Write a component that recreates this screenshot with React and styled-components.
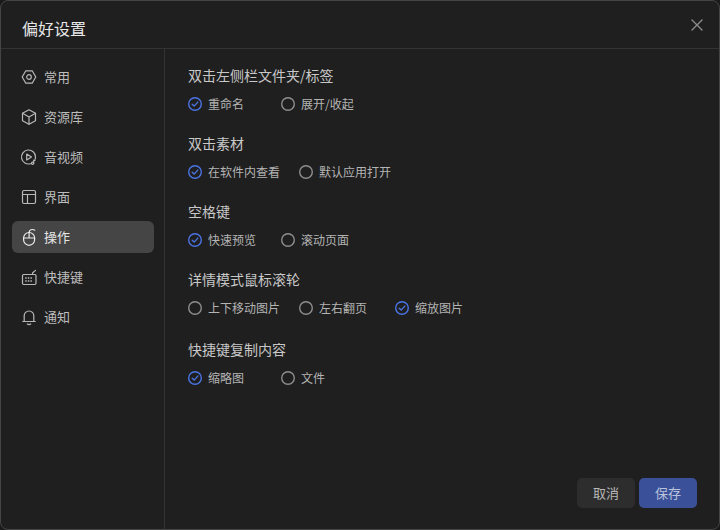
import React from 'react';
import styled, { createGlobalStyle } from 'styled-components';

const Global = createGlobalStyle`
    html, body {
        margin: 0;
        padding: 0;
        width: 720px;
        height: 530px;
        overflow: hidden;
        background: #1a1a1a;
        font-family: "Noto Sans CJK SC", "Noto Sans", sans-serif;
    }
`;

const Dialog = styled.div`
    box-sizing: border-box;
    width: 720px;
    height: 530px;
    display: flex;
    flex-direction: column;
    background: #1f1f1f;
    border: 1px solid #454545;
    border-radius: 8px;
    overflow: hidden;
`;

const Header = styled.div`
    flex: none;
    height: 47px;
    display: flex;
    align-items: center;
    justify-content: space-between;
    padding: 0 14px 0 21px;
    border-bottom: 1px solid #333;
`;

const Title = styled.div`
    font-size: 16px;
    line-height: 24px;
    color: #e8e8e8;
    margin-top: 6px;
`;

const Close = styled.button`
    width: 16px;
    height: 16px;
    padding: 0;
    border: 0;
    background: none;
    color: #8c8c8c;
    display: flex;
    margin-top: 1px;
`;

const Body = styled.div`
    flex: 1;
    display: flex;
    min-height: 0;
`;

const Sidebar = styled.div`
    flex: none;
    box-sizing: border-box;
    width: 164px;
    padding: 12px 10px 0 11px;
    border-right: 1px solid #333;
    display: flex;
    flex-direction: column;
    gap: 8px;
`;

const NavItem = styled.div`
    height: 32px;
    display: flex;
    align-items: center;
    gap: 7px;
    padding-left: 9px;
    border-radius: 6px;
    font-size: 13px;
    color: ${props => props.active ? '#e6e6e6' : '#bdbdbd'};
    background: ${props => props.active ? '#454545' : 'transparent'};

    svg {
        flex: none;
        width: 16px;
        height: 16px;
        overflow: visible;
        color: ${props => props.active ? '#ececec' : '#b8b8b8'};
    }
`;

const NavLabel = styled.span`
    margin-top: -2px;
`;

const Main = styled.div`
    flex: 1;
    display: flex;
    flex-direction: column;
    padding: 14px 22px 21px 23px;
`;

const Groups = styled.div`
    flex: 1;
`;

const Group = styled.div`
    margin-bottom: ${props => props.gap || 18}px;
`;

const GroupTitle = styled.div`
    font-size: 14px;
    line-height: 24px;
    color: #c8c8c8;
    margin-bottom: 8px;
`;

const Options = styled.div`
    display: flex;
    gap: 19px;
`;

const Option = styled.div`
    min-width: ${props => props.wide ? 77 : 74}px;
    height: 18px;
    display: flex;
    align-items: center;
    gap: 6px;
    font-size: 12px;
    color: #b4b4b4;

    svg {
        flex: none;
    }
`;

const OptionLabel = styled.span`
    margin-top: -2px;
`;

const Footer = styled.div`
    flex: none;
    display: flex;
    justify-content: flex-end;
    gap: 4px;
`;

const Button = styled.button`
    width: 58px;
    height: 30px;
    padding: 0 0 2px;
    border: 0;
    border-radius: 5px;
    font-family: inherit;
    font-size: 13px;
    color: ${props => props.primary ? '#b9c3dc' : '#b8b8b8'};
    background: ${props => props.primary ? '#3a5199' : '#2d2d2d'};
`;

const icon = {
    viewBox: '0 0 16 16',
    fill: 'none',
    stroke: 'currentColor',
    strokeWidth: 1.2,
    strokeLinecap: 'round',
    strokeLinejoin: 'round',
};

const icons = {
    general: (
        <svg {...icon}>
            <path d="M4.800 1.800h6.400L14.800 8l-3.600 6.200H4.800L1.200 8z" />
            <circle cx="8" cy="8" r="2.300" />
        </svg>
    ),
    library: (
        <svg {...icon}>
            <path d="M8 .8l6.500 3.500v7.400L8 15.200l-6.500-3.500V4.300z" />
            <path d="M1.500 4.300L8 8l6.500-3.700M8 8v7.200" />
        </svg>
    ),
    media: (
        <svg {...icon}>
            <path d="M9.500 14.700A7 7 0 1 1 14.500 8c0 .8-.1 1.500-.4 2.200" />
            <path d="M5.700 5l4.800 3-4.800 3z" />
            <circle cx="11.600" cy="14.200" r="1.100" />
            <path d="M12.700 14.200V11l1.300.4" />
        </svg>
    ),
    layout: (
        <svg {...icon}>
            <rect x="1.500" y="1.500" width="13" height="13" rx="1.500" />
            <path d="M1.500 5.500h13M6.500 5.500v9" />
        </svg>
    ),
    mouse: (
        <svg {...icon}>
            <rect x="2.600" y="3.500" width="11" height="12.800" rx="5.500" />
            <path d="M8.100 3.500v5.500M2.600 9h11" />
            <path d="M8.100 3.500C8.100 1 11 -.4 13.800 1.200" />
        </svg>
    ),
    keyboard: (
        <svg {...icon}>
            <rect x="1.500" y="5.500" width="13.500" height="10" rx="1.200" />
            <path d="M11.500 5.500V4l3-2.600" />
            <path d="M4.200 9h7.800M4.200 12h7.800" strokeWidth="1.700" strokeDasharray="1.500 1.100" strokeLinecap="butt" />
        </svg>
    ),
    bell: (
        <svg {...icon}>
            <path d="M3.200 12.500V6.800a4.800 4.800 0 0 1 9.600 0v5.700" />
            <path d="M1.800 12.500h12.400" />
            <path d="M6.300 15c.8.500 2.600.500 3.400 0" />
        </svg>
    ),
};

const nav = [
    { key: 'general', label: '常用' },
    { key: 'library', label: '资源库' },
    { key: 'media', label: '音视频' },
    { key: 'layout', label: '界面' },
    { key: 'mouse', label: '操作', active: true },
    { key: 'keyboard', label: '快捷键' },
    { key: 'bell', label: '通知' },
];

const groups = [
    { title: '双击左侧栏文件夹/标签', checked: 0, options: ['重命名', '展开/收起'] },
    { title: '双击素材', checked: 0, options: ['在软件内查看', '默认应用打开'] },
    { title: '空格键', checked: 0, options: ['快速预览', '滚动页面'] },
    { title: '详情模式鼠标滚轮', checked: 2, options: ['上下移动图片', '左右翻页', '缩放图片'], wide: true, gap: 20 },
    { title: '快捷键复制内容', checked: 0, options: ['缩略图', '文件'] },
];

function Radio({ checked, wide, children }) {
    return (
        <Option wide={wide}>
            <svg width="14" height="14" viewBox="0 0 14 14" fill="none" stroke={checked ? '#4a74e4' : '#8e8e8e'} strokeWidth="1.400" strokeLinecap="round" strokeLinejoin="round">
                <circle cx="7" cy="7" r="6.300" />
                {checked && <path d="M4.200 7.200L6.200 9.100 9.800 5.100" />}
            </svg>
            <OptionLabel>{children}</OptionLabel>
        </Option>
    );
}

export default function App() {
    return (
        <>
            <Global />
            <Dialog>
                <Header>
                    <Title>偏好设置</Title>
                    <Close aria-label="关闭">
                        <svg width="16" height="16" viewBox="0 0 16 16" fill="none" stroke="currentColor" strokeWidth="1.400" strokeLinecap="round">
                            <path d="M3 3l10 10M13 3L3 13" />
                        </svg>
                    </Close>
                </Header>
                <Body>
                    <Sidebar>
                        {nav.map(item => (
                            <NavItem key={item.key} active={item.active}>
                                {icons[item.key]}
                                <NavLabel>{item.label}</NavLabel>
                            </NavItem>
                        ))}
                    </Sidebar>
                    <Main>
                        <Groups>
                            {groups.map(group => (
                                <Group key={group.title} gap={group.gap}>
                                    <GroupTitle>{group.title}</GroupTitle>
                                    <Options>
                                        {group.options.map((option, i) => (
                                            <Radio key={option} checked={i === group.checked} wide={group.wide}>{option}</Radio>
                                        ))}
                                    </Options>
                                </Group>
                            ))}
                        </Groups>
                        <Footer>
                            <Button>取消</Button>
                            <Button primary>保存</Button>
                        </Footer>
                    </Main>
                </Body>
            </Dialog>
        </>
    );
}
